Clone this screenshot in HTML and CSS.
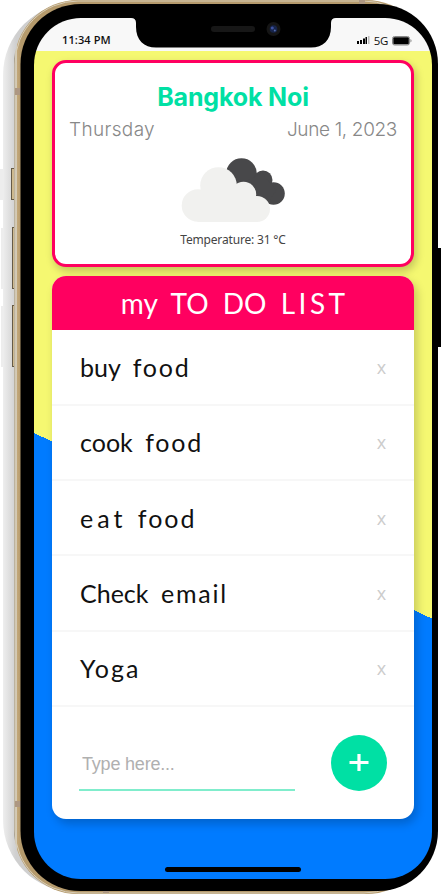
FILE: index.html
```html
<!DOCTYPE html>
<html lang="en">
<head>
<meta charset="utf-8">
<title>To do list</title>
<link rel="stylesheet" href="styles.css">
</head>
<body>
<div class="phone">
  <svg class="frame" width="441" height="894" viewBox="0 0 441 894" aria-hidden="true">
    <defs>
      <linearGradient id="side" gradientUnits="userSpaceOnUse" x1="0" x2="16" y1="0" y2="0"><stop offset="0" stop-color="#f5f5f5"/><stop offset="1" stop-color="#cfcfcf"/></linearGradient>
      <linearGradient id="gold" gradientUnits="userSpaceOnUse" x1="14" x2="21" y1="0" y2="0"><stop offset="0" stop-color="#77705f"/><stop offset=".15" stop-color="#c9bfab"/><stop offset=".38" stop-color="#d5ccb8"/><stop offset=".42" stop-color="#8b7a5c"/><stop offset=".5" stop-color="#c1a678"/><stop offset="1" stop-color="#b59a6c"/></linearGradient>
    </defs>
    <path d="M0 169h10v31H0zM1 228h10v61H1zM1 306h10v61H1z" fill="#ededed"/>
    <rect x="3" y="3" width="200" height="889" rx="72" fill="url(#side)"/>
    <g fill="#cdb98f" stroke="#665b47"><rect x="11.5" y="168.5" width="4" height="31"/><rect x="12.5" y="227.500" width="3" height="61"/><rect x="12.500" y="305.500" width="3" height="61"/></g>
    <rect x="14" y="0" width="416" height="894" rx="64" fill="url(#gold)"/>
    <rect x="15" y="1" width="412" height="892" rx="63" fill="none" stroke="#d8ceb8" stroke-width="1"/>
    <path d="M15 88h6v7h-6zM15 801h6v6h-6zM103 890h6v3h-6zM359 0h6v4h-6z" fill="#ad9782"/>
    <path d="M437 248h4v99h-4z"/>
    <rect x="20.500" y="4" width="417.500" height="887" rx="60"/>
  </svg>
  <main class="screen">
    <header class="status">
      <span>11:34 PM</span>
      <span class="signals">
        <svg width="13" height="9" viewBox="0 0 13 9"><path d="M0 5h2v3H0zM3 4h2v4H3zM6 2.500h2v5.500H6zM8.500 1h1.500v7H8.500z"/><path d="M11 0h1.500v8H11z" fill="#bbb"/></svg>
        <span class="network">5G</span>
        <svg width="20" height="10" viewBox="0 0 20 10"><rect x=".5" y=".5" width="17" height="8.500" rx="2" fill="none" stroke="#888"/><rect x="1.300" y="1.200" width="15.500" height="7" rx="1"/><path d="M18.500 3v3.500q1-.5 1-1.700t-1-1.800" fill="#777"/></svg>
      </span>
    </header>
    <svg class="notch" width="205" height="30" viewBox="0 0 205 30" aria-hidden="true"><path d="M0 0Q5 0 5 5V9C5 22 13 29.500 25 29.500H180C192 29.500 200 22 200 9V5Q200 0 205 0Z"/><rect x="80" y="8" width="44" height="6" rx="3" fill="#171717"/><circle cx="142.500" cy="11" r="7" fill="#151515"/><circle cx="142.500" cy="11" r="3.800" fill="#17244a"/><circle cx="141.300" cy="10" r="1.500" fill="#3e52a0"/><circle cx="143.800" cy="12.500" r="1" fill="#536cae"/></svg>
    <div class="app">
      <section class="weather">
        <h1>Bangkok Noi</h1>
        <div class="date"><span class="day">Thursday</span><span class="full">June 1, 2023</span></div>
        <svg class="clouds" width="106" height="66" viewBox="180.500 157 106 66">
          <g fill="#48484a"><circle cx="242" cy="173.500" r="15.300"/><circle cx="263.500" cy="180" r="9.500"/><circle cx="274" cy="193.500" r="11.300"/><path d="M240 185L262 173L277 190L268 203L250 200Z"/></g>
          <g fill="#f1f1ef"><circle cx="198.500" cy="205.500" r="16.300"/><circle cx="219" cy="185.500" r="18.300"/><circle cx="244" cy="194.500" r="12.700"/><circle cx="257.500" cy="209" r="13"/><path d="M198 196H257V222H198z"/></g>
        </svg>
        <p class="temp">Temperature: 31 °C</p>
      </section>
      <section class="todo">
        <h2>my TO DO <span class="wide">LIST</span></h2>
        <ul>
          <li><span class="buy">buy <span class="food">food</span></span><button class="del">x</button></li>
          <li><span class="cook">cook <span class="food">food</span></span><button class="del">x</button></li>
          <li><span class="eat">eat <span class="food">food</span></span><button class="del">x</button></li>
          <li><span class="check">Check <span class="email">email</span></span><button class="del">x</button></li>
          <li><span class="yoga">Yoga</span><button class="del">x</button></li>
        </ul>
        <form>
          <input type="text" placeholder="Type here...">
          <button class="add" type="button" aria-label="Add"><svg width="20" height="18" viewBox="0 0 20 18"><path d="M10 0v17M.5 8.500h19" stroke="#fff" stroke-width="3.200"/></svg></button>
        </form>
      </section>
    </div>
    <div class="home"></div>
  </main>
</div>
</body>
</html>
```
FILE: styles.css
```css
* { box-sizing: border-box; }
body { margin: 0; background: #fff; overflow: hidden; }
h1, h2, p, ul { margin: 0; padding: 0; }
.phone { position: relative; width: 441px; height: 894px; padding: 18px 9px 15px 34px; }
.frame { position: absolute; left: 0; top: 0; }
.screen { position: relative; width: 398px; height: 861px; border-radius: 47px; overflow: hidden; }
.status { height: 33px; padding: 10px 20px 0 28px; background: #f8f8f8; display: flex; justify-content: space-between; align-items: center; font: 600 11px "Open Sans", sans-serif; letter-spacing: .1px; color: #111; }
.signals { display: flex; align-items: center; gap: 4px; padding-top: 2px; }
.network { font-weight: 500; font-size: 11.5px; line-height: 14px; letter-spacing: -.3px; }
.notch { position: absolute; left: 97px; top: 0; }
.app { height: 828px; padding: 9px 18px; background: linear-gradient(25deg, #007bff 44%, #f5f871 44%); }
.weather { height: 207px; border: 3px solid #ff0060; border-radius: 14px; background: #fff; box-shadow: 2px 4px 9px rgba(0,0,0,.22); padding: 18px 14px 0; display: flex; flex-direction: column; align-items: center; }
h1 { font: 700 25px/32px Inter, sans-serif; color: #00e0a4; letter-spacing: -.15px; white-space: nowrap; }
.date { align-self: stretch; display: flex; justify-content: space-between; font: 300 19px/26px Inter, sans-serif; color: #888; padding-top: 4px; height: 32px; }
.day { letter-spacing: .35px; }
.full { letter-spacing: -.35px; }
.clouds { margin-top: 12px; }
.temp { font: 12px/16px "Noto Sans", sans-serif; letter-spacing: -.17px; color: #444; margin-top: 9px; }
.todo { height: 543px; margin-top: 9px; border-radius: 14px; overflow: hidden; background: #fff; box-shadow: 3px 5px 10px rgba(0,0,0,.2); }
h2 { height: 54px; background: #ff0060; color: #fff; text-align: center; font: 400 28px/54px Lato, sans-serif; word-spacing: 7px; }
.wide { letter-spacing: 3.500px; margin-right: -3.500px; }
ul { list-style: none; padding-top: .5px; }
li { height: 75.300px; border-bottom: 2px solid #f7f7f7; display: flex; justify-content: space-between; align-items: center; padding: 0 27px 0 28px; font: 400 25px/30px Lato, sans-serif; color: #111; white-space: nowrap; word-spacing: 6px; }
.food, .email { letter-spacing: 1.8px; }
.eat { letter-spacing: 4px; word-spacing: 1px; }
.eat .food { letter-spacing: 2px; }
.yoga { letter-spacing: 2px; }
button { border: 0; padding: 0; background: none; }
.del { font: 18px/20px "Open Sans", sans-serif; color: #ccc; width: 11px; }
form { display: flex; justify-content: space-between; padding: 28px 27px 0; }
input { width: 216px; height: 56px; border: 0; border-bottom: 2px solid #80edcc; padding: 5px 3px 0; font: 18px "Liberation Sans", sans-serif; letter-spacing: -.2px; background: none; outline: 0; }
input::placeholder { color: #b0b0b0; }
.add { width: 56px; height: 56px; border-radius: 50%; background: #00e0a4; display: flex; align-items: center; justify-content: center; }
.home { position: absolute; left: 131px; top: 849px; width: 136px; height: 5px; border-radius: 3px; background: #000; }
```
